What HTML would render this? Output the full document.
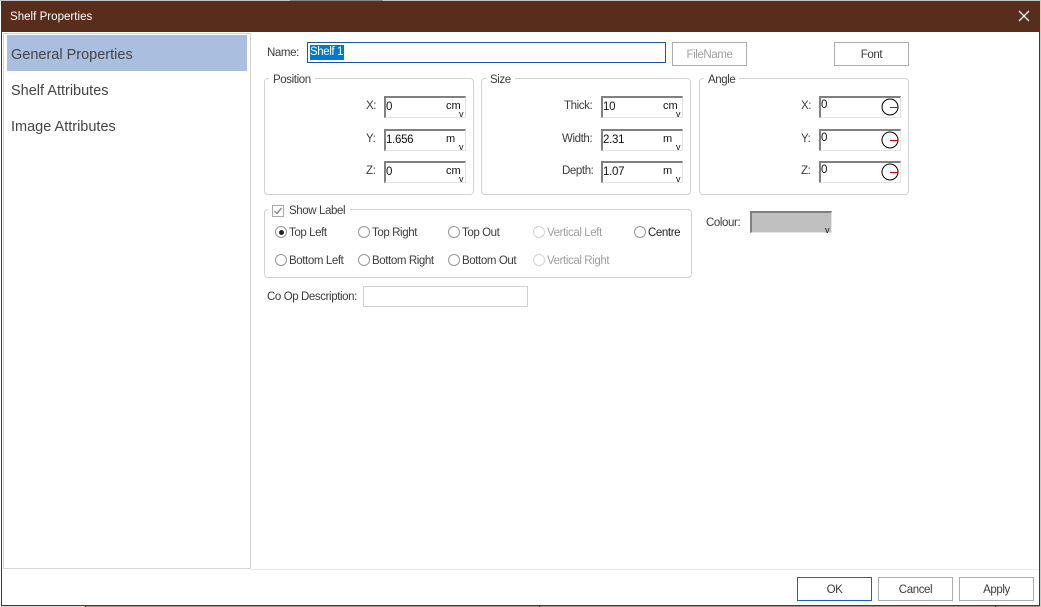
<!DOCTYPE html>
<html><head><meta charset="utf-8"><style>
html,body{margin:0;padding:0;background:#fff}
#r{position:relative;width:1041px;height:607px;overflow:hidden;background:#fff;font-family:"Liberation Sans",sans-serif;font-size:11.5px;color:#3c3c3c}
#r div{position:absolute;box-sizing:border-box}
.t{white-space:nowrap;line-height:14px;letter-spacing:-.4px}
.n{font-size:14.5px;line-height:18px;color:#444;letter-spacing:0}
.g{border:1px solid #d2d2d2;border-radius:4px}
.leg{background:#fff;padding:0 4px;white-space:nowrap;line-height:14px;letter-spacing:-.4px}
.f{border-top:2px solid #808080;border-left:2px solid #808080;border-right:1px solid #e3e3e3;border-bottom:1px solid #e3e3e3;background:#fff;width:82px;height:22px}
.v{color:#111;white-space:nowrap;line-height:14px;font-size:11.5px;letter-spacing:-.3px}
.u{color:#111;white-space:nowrap;line-height:14px;font-size:11px}
.c{color:#111;white-space:nowrap;line-height:14px;font-size:9px}
.b{border:1px solid #adadad;background:#fff;text-align:center;line-height:24px;height:24px;width:75px;letter-spacing:-.4px}
.rad{width:12px;height:12px;border:1px solid #969696;border-radius:50%;background:#fff}
.d{color:#a0a0a0}
.dr{border-color:#d4d4d4}
.red{width:8px;height:1px;background:#d80000}
</style></head><body><div id="r">
<div style="left:0;top:0;width:1041px;height:1px;background:#c4c4c4"></div>
<div style="left:290px;top:0;width:93px;height:1px;background:#8a8a8a"></div>
<div style="left:0;top:606px;width:1041px;height:1px;background:#a09690"></div>
<div style="left:0;top:606px;width:85px;height:1px;background:#d8d4d0"></div>
<div style="left:85px;top:606px;width:1px;height:1px;background:#222"></div>
<div style="left:539px;top:606px;width:1px;height:1px;background:#222"></div>
<div style="left:995px;top:606px;width:1px;height:1px;background:#222"></div>
<div style="left:1040px;top:0;width:1px;height:607px;background:#d8c8c0"></div>
<div style="left:1px;top:1px;width:1039px;height:605px;border:1px solid #5a3222;border-top:none;background:#fff"></div>
<div style="left:1px;top:1px;width:1039px;height:31px;background:#582d1c"></div>
<div class="t" style="left:10px;top:10px;color:#fff;font-size:11.5px;letter-spacing:.03px">Shelf Properties</div>
<svg style="position:absolute;left:1018px;top:10px" width="12" height="12" viewBox="0 0 12 12"><path d="M1 1L11 11M11 1L1 11" stroke="#fff" stroke-width="1.3" fill="none"/></svg>

<div style="left:3px;top:33px;width:248px;height:536px;border:1px solid #d4d4d4"></div>
<div style="left:7px;top:35px;width:240px;height:36px;background:#aabfe0"></div>
<div class="t n" style="left:11px;top:46px">General Properties</div>
<div class="t n" style="left:11px;top:82px">Shelf Attributes</div>
<div class="t n" style="left:11px;top:118px">Image Attributes</div>
<div style="left:251px;top:569px;width:788px;height:1px;background:#eaeaea"></div>

<div class="t" style="left:267px;top:46px">Name:</div>
<div style="left:307px;top:42px;width:359px;height:21px;border:1px solid #1a5a9c;background:#fff"></div>
<div style="left:310px;top:45px;width:34px;height:15px;background:#0078d7"></div>
<div class="t" style="left:310px;top:45px;color:#fff">Shelf 1</div>
<div class="b d" style="left:672px;top:42px">FileName</div>
<div class="b" style="left:834px;top:42px">Font</div>

<div class="g" style="left:264px;top:78px;width:210px;height:117px"></div>
<div class="leg" style="left:269px;top:73px">Position</div>
<div class="g" style="left:481px;top:78px;width:210px;height:117px"></div>
<div class="leg" style="left:486px;top:73px">Size</div>
<div class="g" style="left:699px;top:78px;width:210px;height:117px"></div>
<div class="leg" style="left:704px;top:73px">Angle</div>

<div class="t" style="left:366px;top:99px">X:</div>
<div class="t" style="left:366px;top:132px">Y:</div>
<div class="t" style="left:366px;top:164px">Z:</div>
<div class="f" style="left:384px;top:96px"></div>
<div class="f" style="left:384px;top:129px"></div>
<div class="f" style="left:384px;top:161px"></div>
<div class="v" style="left:386px;top:100px">0</div>
<div class="v" style="left:386px;top:133px">1.656</div>
<div class="v" style="left:386px;top:165px">0</div>
<div class="u" style="left:446px;top:99px">cm</div>
<div class="u" style="left:446px;top:132px">m</div>
<div class="u" style="left:446px;top:164px">cm</div>
<div class="c" style="left:459px;top:107px">v</div>
<div class="c" style="left:459px;top:140px">v</div>
<div class="c" style="left:459px;top:172px">v</div>

<div class="t" style="left:564px;top:99px">Thick:</div>
<div class="t" style="left:562px;top:132px">Width:</div>
<div class="t" style="left:562px;top:164px">Depth:</div>
<div class="f" style="left:601px;top:96px"></div>
<div class="f" style="left:601px;top:129px"></div>
<div class="f" style="left:601px;top:161px"></div>
<div class="v" style="left:603px;top:100px">10</div>
<div class="v" style="left:603px;top:133px">2.31</div>
<div class="v" style="left:603px;top:165px">1.07</div>
<div class="u" style="left:663px;top:99px">cm</div>
<div class="u" style="left:663px;top:132px">m</div>
<div class="u" style="left:663px;top:164px">m</div>
<div class="c" style="left:676px;top:107px">v</div>
<div class="c" style="left:676px;top:140px">v</div>
<div class="c" style="left:676px;top:172px">v</div>

<div class="t" style="left:801px;top:99px">X:</div>
<div class="t" style="left:801px;top:132px">Y:</div>
<div class="t" style="left:801px;top:164px">Z:</div>
<div class="f" style="left:819px;top:96px"></div>
<div class="f" style="left:819px;top:129px"></div>
<div class="f" style="left:819px;top:161px"></div>
<div class="v" style="left:821px;top:98px">0</div>
<div class="v" style="left:821px;top:131px">0</div>
<div class="v" style="left:821px;top:163px">0</div>
<svg style="position:absolute;left:881px;top:98px" width="18" height="18" viewBox="0 0 18 18"><circle cx="9" cy="9" r="8" fill="#fff" stroke="#000"/></svg>
<svg style="position:absolute;left:881px;top:131px" width="18" height="18" viewBox="0 0 18 18"><circle cx="9" cy="9" r="8" fill="#fff" stroke="#000"/></svg>
<svg style="position:absolute;left:881px;top:163px" width="18" height="18" viewBox="0 0 18 18"><circle cx="9" cy="9" r="8" fill="#fff" stroke="#000"/></svg>
<div class="red" style="left:890px;top:107px"></div>
<div class="red" style="left:890px;top:140px"></div>
<div class="red" style="left:890px;top:172px"></div>

<div class="g" style="left:264px;top:209px;width:428px;height:69px"></div>
<div style="left:268px;top:203px;width:82px;height:14px;background:#fff"></div>
<div style="left:272px;top:205px;width:12px;height:12px;border:1px solid #a8a8a8;background:#fff"></div>
<svg style="position:absolute;left:273px;top:206px" width="10" height="10" viewBox="0 0 10 10"><path d="M1.5 5L4 7.5L8.5 2" stroke="#777" stroke-width="1.2" fill="none"/></svg>
<div class="t" style="left:289px;top:204px">Show Label</div>

<div class="rad" style="left:275px;top:226px"></div>
<div style="left:279px;top:230px;width:5px;height:5px;border-radius:50%;background:#222"></div>
<div class="t" style="left:289px;top:226px">Top Left</div>
<div class="rad" style="left:358px;top:226px"></div>
<div class="t" style="left:372px;top:226px">Top Right</div>
<div class="rad" style="left:448px;top:226px"></div>
<div class="t" style="left:462px;top:226px">Top Out</div>
<div class="rad dr" style="left:533px;top:226px"></div>
<div class="t d" style="left:547px;top:226px">Vertical Left</div>
<div class="rad" style="left:634px;top:226px"></div>
<div class="t" style="left:648px;top:226px;color:#222">Centre</div>
<div class="rad" style="left:275px;top:254px"></div>
<div class="t" style="left:289px;top:254px">Bottom Left</div>
<div class="rad" style="left:358px;top:254px"></div>
<div class="t" style="left:372px;top:254px">Bottom Right</div>
<div class="rad" style="left:448px;top:254px"></div>
<div class="t" style="left:462px;top:254px">Bottom Out</div>
<div class="rad dr" style="left:533px;top:254px"></div>
<div class="t d" style="left:547px;top:254px">Vertical Right</div>

<div class="t" style="left:706px;top:216px">Colour:</div>
<div class="f" style="left:750px;top:211px;background:#c0c0c0"></div>
<div class="c" style="left:825px;top:223px">v</div>

<div class="t" style="left:267px;top:290px">Co Op Description:</div>
<div style="left:363px;top:286px;width:165px;height:21px;border:1px solid #d0d0d0;background:#fff"></div>

<div class="b" style="left:797px;top:577px;border-color:#1a64b4">OK</div>
<div class="b" style="left:878px;top:577px">Cancel</div>
<div class="b" style="left:959px;top:577px">Apply</div>
</div></body></html>
